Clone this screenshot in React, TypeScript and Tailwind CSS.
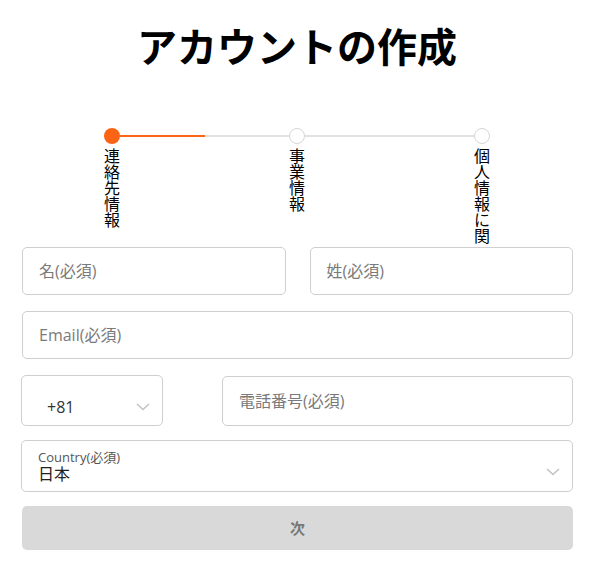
import React from "react";

const font = { fontFamily: '"Open Sans", "Noto Sans CJK JP", sans-serif' };

const steps = ["連絡先情報", "事業情報", "個人情報に関する同意"];

const Chevron = () => (
  <svg width="14" height="8" viewBox="0 0 14 8" fill="none">
    <path d="M1 1l6 5.5L13 1" stroke="#c4c4c4" strokeWidth="1.6" />
  </svg>
);

const Stepper = () => {
  return (
    <div className="mx-auto mt-[55px] flex h-[116px] w-[386px] items-start overflow-hidden">
      {steps.map((label, i) => (
        <React.Fragment key={label}>
          <div className="flex w-4 shrink-0 flex-col">
            <div
              className={
                i === 0
                  ? "h-4 w-4 shrink-0 rounded-full bg-[#fa6414]"
                  : "h-4 w-4 shrink-0 rounded-full border border-[#d6d6d6] bg-white"
              }
            />
            <div className="mt-[4px] w-4 shrink-0 text-[16px] leading-[16px] text-black">{label}</div>
          </div>
          {i < steps.length - 1 && (
            <div className="mt-[7px] h-[2px] flex-1 bg-[#e2e2e2]">
              {i === 0 && <div className="h-full w-1/2 bg-[#fa6414]" />}
            </div>
          )}
        </React.Fragment>
      ))}
    </div>
  );
};

const Field = ({ placeholder, className = "" }: { placeholder: string; className?: string }) => (
  <div
    className={
      "flex h-12 items-center rounded-[5px] border border-[#cfcfcf] bg-white px-4 text-[16px] text-[#7a7a7a] " +
      className
    }
  >
    {placeholder}
  </div>
);

export default function App() {
  return (
    <div className="min-h-screen w-full bg-white" style={font}>
      <h1
        className="mt-[17px] text-center text-[40px] font-bold leading-[56px] text-black"
        style={{ fontFamily: '"Noto Sans CJK JP", sans-serif' }}
      >
        アカウントの作成
      </h1>

      <Stepper />

      <div className="mt-[3px] flex flex-col px-[21px]">
        <div className="flex gap-6 pl-px">
          <Field placeholder="名(必須)" className="flex-1" />
          <Field placeholder="姓(必須)" className="flex-1" />
        </div>

        <Field placeholder="Email(必須)" className="ml-px mt-4" />

        <div className="mt-4 flex items-center">
          <div className="flex h-[51px] w-[142px] items-center justify-between rounded-[5px] border border-[#cfcfcf] pl-[25px] pr-[12px] pt-[12px]">
            <span className="text-[16px] text-[#333]">+81</span>
            <Chevron />
          </div>
          <Field placeholder="電話番号(必須)" className="ml-[59px] h-[50px] flex-1" />
        </div>

        <div className="mt-[14px] flex h-[52px] items-center justify-between rounded-[5px] border border-[#cfcfcf] pl-4 pr-[12px]">
          <div className="flex flex-col">
            <span className="text-[13px] leading-[16px] text-[#555]">Country(必須)</span>
            <span className="text-[16px] leading-[19px] text-[#222]">日本</span>
          </div>
          <div className="pt-[12px]">
            <Chevron />
          </div>
        </div>

        <button className="ml-px mt-[14px] flex h-[44px] items-center justify-center rounded-[5px] bg-[#d9d9d9] text-[15px] font-bold text-[#777]">
          次
        </button>
      </div>
    </div>
  );
}
